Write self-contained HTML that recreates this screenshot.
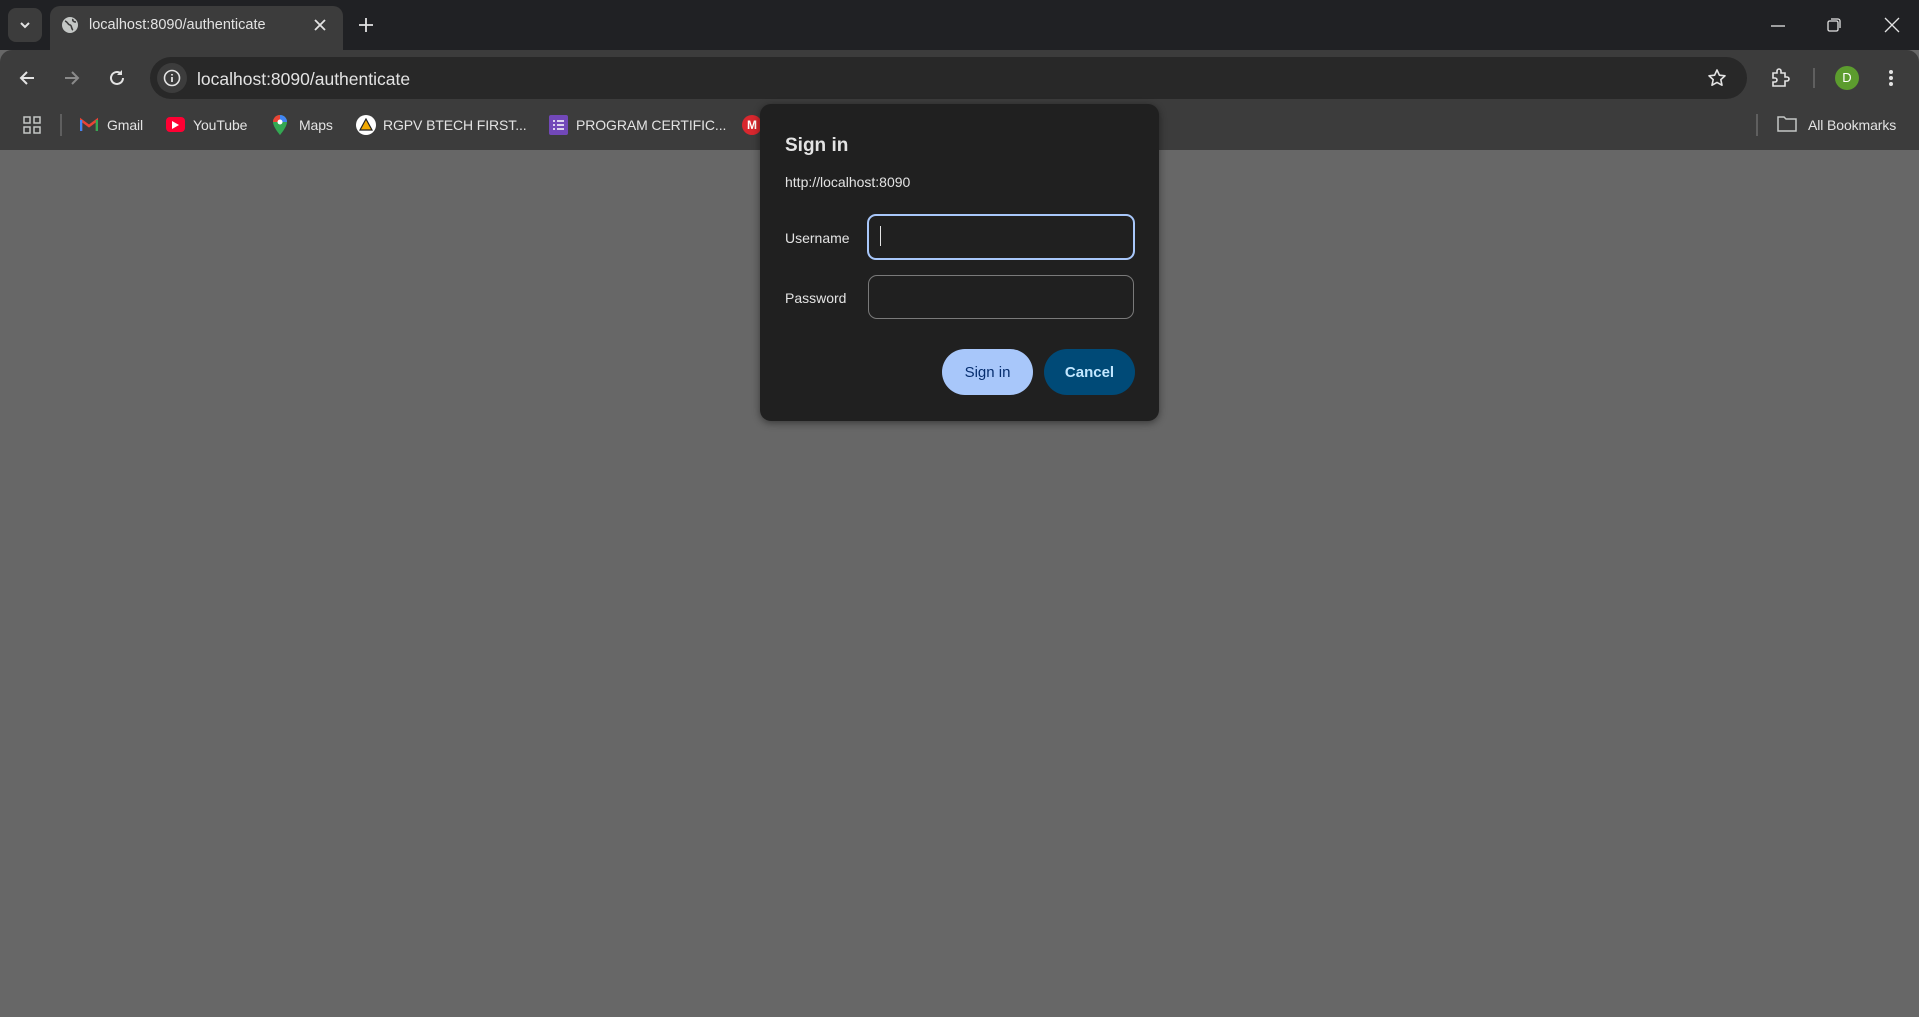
<!DOCTYPE html>
<html><head><meta charset="utf-8"><style>
*{margin:0;padding:0;box-sizing:border-box}
body{width:1919px;height:1017px;overflow:hidden;background:#676767;font-family:"Liberation Sans",sans-serif;position:relative}
.a{position:absolute}
.tabs{left:0;top:0;width:1919px;height:50px;background:#202124}
.tab{left:50px;top:6px;width:293px;height:50px;background:#3c3c3c;border-radius:10px 10px 0 0}
.tb{left:0;top:50px;width:1919px;height:100px;background:#3c3c3c;border-radius:12px 12px 0 0}
.omni{left:150px;top:57px;width:1597px;height:42px;background:#282828;border-radius:21px}
.t{color:#e3e3e3;white-space:nowrap}
.bm{top:117px;font-size:14px;color:#e3e3e3;letter-spacing:-0.1px}
.dlg{left:760px;top:104px;width:399px;height:317px;background:#202020;border-radius:11px;box-shadow:0 2px 8px rgba(0,0,0,.45)}
</style></head><body>
<div class="a tabs"></div>
<div class="a" style="left:8px;top:8px;width:34px;height:34px;background:#3c3c3c;border-radius:8px"></div>
<svg class="a" style="left:18px;top:18px" width="14" height="14"><path d="M3 5l4 4 4-4" stroke="#e3e3e3" stroke-width="2" fill="none"/></svg>
<div class="a tab"></div>
<svg class="a" style="left:61px;top:16px" width="18" height="18"><circle cx="9" cy="9" r="8" fill="#c4c7c5"/><path d="M4 5c3 1 3 4 5 4s1 4 3 5M12 3c-1 2 1 3 3 3" stroke="#3c3c3c" stroke-width="1.6" fill="none"/></svg>
<div class="a t" style="left:89px;top:17px;font-size:14.5px">localhost:8090/authenticate</div>
<svg class="a" style="left:313px;top:18px" width="14" height="14"><path d="M2 2l10 10M12 2L2 12" stroke="#e3e3e3" stroke-width="1.8"/></svg>
<svg class="a" style="left:358px;top:17px" width="16" height="16"><path d="M8 1v14M1 8h14" stroke="#e3e3e3" stroke-width="1.8"/></svg>
<svg class="a" style="left:1770px;top:18px" width="16" height="16"><path d="M1 8h14" stroke="#e3e3e3" stroke-width="1.3"/></svg>
<svg class="a" style="left:1826px;top:17px" width="16" height="16"><rect x="2" y="4" width="10" height="10" rx="1.5" stroke="#e3e3e3" fill="none" stroke-width="1.3"/><path d="M5 2h7a2 2 0 0 1 2 2v7" stroke="#e3e3e3" fill="none" stroke-width="1.3"/></svg>
<svg class="a" style="left:1884px;top:17px" width="16" height="16"><path d="M1 1l14 14M15 1L1 15" stroke="#e3e3e3" stroke-width="1.3"/></svg>
<div class="a tb"></div>
<svg class="a" style="left:17px;top:68px" width="20" height="20"><path d="M17 10H4M10 4l-6 6 6 6" stroke="#e3e3e3" stroke-width="2" fill="none"/></svg>
<svg class="a" style="left:62px;top:68px" width="20" height="20"><path d="M3 10h13M10 4l6 6-6 6" stroke="#8a8a8a" stroke-width="2" fill="none"/></svg>
<svg class="a" style="left:107px;top:68px" width="20" height="20"><path d="M16 10a6 6 0 1 1-2-4.5" stroke="#e3e3e3" stroke-width="2" fill="none"/><path d="M15 2v5h-5" fill="#e3e3e3"/></svg>
<div class="a omni"></div>
<div class="a" style="left:157px;top:63px;width:30px;height:30px;border-radius:15px;background:#3c3c3c"></div>
<svg class="a" style="left:162px;top:68px" width="20" height="20"><circle cx="10" cy="10" r="7.5" stroke="#e3e3e3" stroke-width="1.6" fill="none"/><path d="M10 9v5M10 6v1.5" stroke="#e3e3e3" stroke-width="1.8"/></svg>
<div class="a t" style="left:197px;top:69px;font-size:17.5px">localhost:8090/authenticate</div>
<svg class="a" style="left:1707px;top:68px" width="20" height="20"><path d="M10 2l2.4 5.2 5.6.6-4.2 3.8 1.2 5.6L10 14.4 5 17.2l1.2-5.6L2 7.8l5.6-.6z" stroke="#e3e3e3" stroke-width="1.6" fill="none" stroke-linejoin="round"/></svg>
<svg class="a" style="left:1770px;top:67px" width="22" height="22"><path d="M3 6h4V4a2 2 0 0 1 4 0v2h4v4h2a2 2 0 0 1 0 4h-2v5H3v-4h2a2 2 0 0 0 0-4H3z" stroke="#e3e3e3" stroke-width="1.6" fill="none"/></svg>
<div class="a" style="left:1813px;top:68px;width:2px;height:20px;background:#5f5f5f"></div>
<div class="a" style="left:1835px;top:66px;width:24px;height:24px;border-radius:12px;background:#5c9c2e;color:#fff;font-size:13px;text-align:center;line-height:24px">D</div>
<svg class="a" style="left:1885px;top:68px" width="12" height="20"><circle cx="6" cy="4" r="2" fill="#e3e3e3"/><circle cx="6" cy="10" r="2" fill="#e3e3e3"/><circle cx="6" cy="16" r="2" fill="#e3e3e3"/></svg>
<svg class="a" style="left:23px;top:116px" width="18" height="18"><g stroke="#c4c7c5" stroke-width="1.5" fill="none"><rect x="1" y="1" width="6" height="6"/><rect x="11" y="1" width="6" height="6"/><rect x="1" y="11" width="6" height="6"/><rect x="11" y="11" width="6" height="6"/></g></svg>
<div class="a" style="left:60px;top:114px;width:2px;height:22px;background:#5f5f5f"></div>
<svg class="a" style="left:80px;top:117px" width="18" height="15"><path d="M1 14V3l8 6 8-6v11" stroke="#ea4335" stroke-width="2.5" fill="none"/><path d="M1 14V3" stroke="#4285f4" stroke-width="2.5"/><path d="M17 14V3" stroke="#34a853" stroke-width="2.5"/></svg>
<div class="a bm" style="left:107px">Gmail</div>
<div class="a" style="left:166px;top:117px;width:19px;height:15px;border-radius:4px;background:#ff0033"></div>
<svg class="a" style="left:172px;top:121px" width="8" height="8"><path d="M0 0l7 4-7 4z" fill="#fff"/></svg>
<div class="a bm" style="left:193px">YouTube</div>
<svg class="a" style="left:272px;top:114px" width="16" height="22"><path d="M8 1a7 7 0 0 1 7 7c0 5-7 13-7 13S1 13 1 8a7 7 0 0 1 7-7z" fill="#34a853"/><path d="M8 1a7 7 0 0 1 7 7H8z" fill="#4285f4"/><path d="M1 8a7 7 0 0 1 7-7v7z" fill="#ea4335"/><circle cx="8" cy="8" r="2.5" fill="#fff"/></svg>
<div class="a bm" style="left:299px">Maps</div>
<div class="a" style="left:356px;top:115px;width:20px;height:20px;border-radius:10px;background:#fff"></div>
<svg class="a" style="left:359px;top:118px" width="14" height="14"><path d="M7 1l6 11H1z" fill="#f2a900" stroke="#222" stroke-width="1.2"/></svg>
<div class="a bm" style="left:383px">RGPV BTECH FIRST...</div>
<div class="a" style="left:549px;top:115px;width:19px;height:20px;border-radius:2px;background:#7248b9"></div>
<svg class="a" style="left:552px;top:119px" width="13" height="12"><path d="M1 2h2M5 2h7M1 6h2M5 6h7M1 10h2M5 10h7" stroke="#fff" stroke-width="1.6"/></svg>
<div class="a bm" style="left:576px">PROGRAM CERTIFIC...</div>
<div class="a" style="left:742px;top:115px;width:20px;height:20px;border-radius:10px;background:#d9272e;color:#fff;font-size:12px;font-weight:bold;text-align:center;line-height:20px">M</div>
<div class="a" style="left:1756px;top:114px;width:2px;height:22px;background:#5f5f5f"></div>
<svg class="a" style="left:1777px;top:115px" width="20" height="18"><path d="M1 2h6l2 2h10v12H1z" stroke="#c4c7c5" stroke-width="1.5" fill="none"/></svg>
<div class="a bm" style="left:1808px">All Bookmarks</div>

<div class="a dlg"></div>
<div class="a t" style="left:785px;top:135px;font-size:19px;font-weight:bold">Sign in</div>
<div class="a t" style="left:785px;top:174px;font-size:14px">http://localhost:8090</div>
<div class="a t" style="left:785px;top:230px;font-size:14px">Username</div>
<div class="a t" style="left:785px;top:290px;font-size:14px">Password</div>
<div class="a" style="left:867px;top:214px;width:268px;height:46px;border:2px solid #a8c7fa;border-radius:9px"></div>
<div class="a" style="left:880px;top:226px;width:1px;height:20px;background:#e3e3e3"></div>
<div class="a" style="left:868px;top:275px;width:266px;height:44px;border:1px solid #7a7a7a;border-radius:9px"></div>
<div class="a" style="left:942px;top:349px;width:91px;height:46px;border-radius:23px;background:#a8c7fa;color:#062e6f;font-size:15px;text-align:center;line-height:48px">Sign in</div>
<div class="a" style="left:1044px;top:349px;width:91px;height:46px;border-radius:23px;background:#004a77;color:#c2e7ff;font-size:15px;font-weight:bold;text-align:center;line-height:48px">Cancel</div>
</body></html>
